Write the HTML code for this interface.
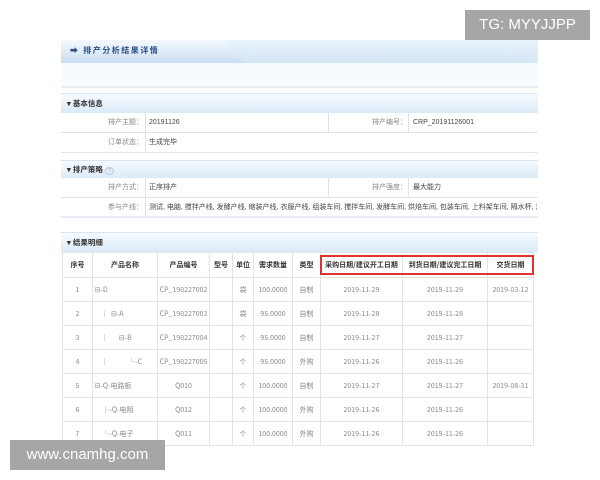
<!DOCTYPE html>
<html><head><meta charset="utf-8"><style>
*{margin:0;padding:0;box-sizing:border-box}
body{width:600px;height:480px;background:#fff;position:relative;overflow:hidden;font-family:"Liberation Sans","Noto Sans CJK SC",sans-serif;font-size:7px;color:#555}
.a{position:absolute}
.sec{position:absolute;left:61px;width:477px;height:20px;background:linear-gradient(#f7fbff,#dbeaf8);border-top:1px solid #d6e4f2;font-weight:bold;color:#333;font-size:7.5px;line-height:20px;padding-left:6px}
.row{position:absolute;left:61px;width:477px;height:20px;border-bottom:1px solid #dde3ea;background:#fff;line-height:20px;font-size:7px}
.lbl{position:absolute;text-align:right;color:#888}
.v{position:absolute;color:#444}
.vl{position:absolute;top:0;bottom:0;width:1px;background:#dde3ea}
table{position:absolute;left:62px;top:252px;border-collapse:collapse;table-layout:fixed}
td,th{border:1px solid #dfe4ea;height:24px;text-align:center;vertical-align:middle;line-height:10px;font-size:7px;color:#888;font-weight:normal;white-space:nowrap;overflow:hidden;font-family:"Noto Sans CJK SC",sans-serif}
th{color:#333;font-weight:bold;font-size:7px;height:25px;background:#fff}
td.l{text-align:left}
</style></head><body>
<div class="a" style="left:61px;top:40px;width:477px;height:23px;background:linear-gradient(#eaf3fc,#d4e6f6)"></div>
<svg class="a" style="left:61px;top:40px" width="190" height="23"><defs><linearGradient id="g" x1="0" y1="0" x2="0" y2="1"><stop offset="0" stop-color="#f5f9fe"/><stop offset="1" stop-color="#c9def2"/></linearGradient></defs><path d="M0 0H158 C170 0 172 23 190 23 H0Z" fill="url(#g)"/></svg>
<div class="a" style="left:70px;top:45px;font-size:8px;font-weight:bold;color:#2a4f86;letter-spacing:1.5px">➡ 排产分析结果详情</div>
<div class="a" style="left:61px;top:63px;width:477px;height:25px;background:#f8fbfd;border-bottom:2px solid #e6ecf2"></div>

<div class="sec" style="top:93px">▾ 基本信息</div>
<div class="row" style="top:113px"><div class="lbl" style="left:0;width:82px">排产主题：</div><div class="vl" style="left:84px"></div><div class="v" style="left:88px">20191126</div><div class="vl" style="left:267px"></div><div class="lbl" style="left:270px;width:76px">排产编号：</div><div class="vl" style="left:347px"></div><div class="v" style="left:352px">CRP_20191126001</div></div>
<div class="row" style="top:133px"><div class="lbl" style="left:0;width:82px">订单状态：</div><div class="vl" style="left:84px"></div><div class="v" style="left:88px">生成完毕</div></div>

<div class="sec" style="top:160px;height:18px;line-height:18px">▾ 排产策略 <span style="color:#9ab;font-weight:normal;border:1px solid #bcd;border-radius:50%;font-size:5px;padding:0 2px">?</span></div>
<div class="row" style="top:178px"><div class="lbl" style="left:0;width:82px">排产方式：</div><div class="vl" style="left:84px"></div><div class="v" style="left:88px">正序排产</div><div class="vl" style="left:267px"></div><div class="lbl" style="left:270px;width:76px">排产强度：</div><div class="vl" style="left:347px"></div><div class="v" style="left:352px">最大能力</div></div>
<div class="row" style="top:198px;border-bottom:2px solid #e6ecf2"><div class="lbl" style="left:0;width:82px">参与产线：</div><div class="vl" style="left:84px"></div><div class="v" style="left:88px;white-space:nowrap;width:388px;overflow:hidden">测试, 电脑, 搅拌产线, 发酵产线, 缩装产线, 衣服产线, 组装车间, 搅拌车间, 发酵车间, 烘焙车间, 包装车间, 上料架车间, 隔水杯, 测试</div></div>

<div class="sec" style="top:232px;height:20px">▾ 结果明细</div>
<table>
<colgroup><col style="width:30px"><col style="width:65px"><col style="width:52px"><col style="width:23px"><col style="width:21px"><col style="width:39px"><col style="width:28px"><col style="width:82px"><col style="width:85px"><col style="width:46px"></colgroup>
<tr><th>序号</th><th>产品名称</th><th>产品编号</th><th>型号</th><th>单位</th><th>需求数量</th><th>类型</th><th>采购日期/建议开工日期</th><th>到货日期/建议完工日期</th><th>交货日期</th></tr>
<tr><td>1</td><td class="l">&nbsp;⊟-D</td><td>CP_190227002</td><td></td><td>袋</td><td>100.0000</td><td>自制</td><td>2019-11-29</td><td>2019-11-29</td><td>2019-03-12</td></tr>
<tr><td>2</td><td class="l">&nbsp;&nbsp;&nbsp;&nbsp;&nbsp;│&nbsp;&nbsp;⊟-A</td><td>CP_190227003</td><td></td><td>袋</td><td>95.0000</td><td>自制</td><td>2019-11-28</td><td>2019-11-28</td><td></td></tr>
<tr><td>3</td><td class="l">&nbsp;&nbsp;&nbsp;&nbsp;&nbsp;│&nbsp;&nbsp;&nbsp;&nbsp;&nbsp;&nbsp;&nbsp;⊟-B</td><td>CP_190227004</td><td></td><td>个</td><td>95.0000</td><td>自制</td><td>2019-11-27</td><td>2019-11-27</td><td></td></tr>
<tr><td>4</td><td class="l">&nbsp;&nbsp;&nbsp;&nbsp;&nbsp;│&nbsp;&nbsp;&nbsp;&nbsp;&nbsp;&nbsp;&nbsp;&nbsp;&nbsp;&nbsp;&nbsp;&nbsp;&nbsp;└-C</td><td>CP_190227005</td><td></td><td>个</td><td>95.0000</td><td>外购</td><td>2019-11-26</td><td>2019-11-26</td><td></td></tr>
<tr><td>5</td><td class="l">&nbsp;⊟-Q-电路板</td><td>Q010</td><td></td><td>个</td><td>100.0000</td><td>自制</td><td>2019-11-27</td><td>2019-11-27</td><td>2019-08-31</td></tr>
<tr><td>6</td><td class="l">&nbsp;&nbsp;&nbsp;&nbsp;&nbsp;&nbsp;├-Q-电阻</td><td>Q012</td><td></td><td>个</td><td>100.0000</td><td>外购</td><td>2019-11-26</td><td>2019-11-26</td><td></td></tr>
<tr><td>7</td><td class="l">&nbsp;&nbsp;&nbsp;&nbsp;&nbsp;&nbsp;└-Q-电子</td><td>Q011</td><td></td><td>个</td><td>100.0000</td><td>外购</td><td>2019-11-26</td><td>2019-11-26</td><td></td></tr>
</table>
<div class="a" style="left:320px;top:255px;width:214px;height:20px;border:2px solid #d33"></div>

<div class="a" style="left:465px;top:10px;width:125px;height:30px;background:#a6a6a6;color:#fff;font-size:15px;line-height:30px;text-align:center">TG: MYYJJPP</div>
<div class="a" style="left:10px;top:440px;width:155px;height:30px;background:#a6a6a6;color:#fff;font-size:15px;line-height:30px;text-align:center">www.cnamhg.com</div>
</body></html>
